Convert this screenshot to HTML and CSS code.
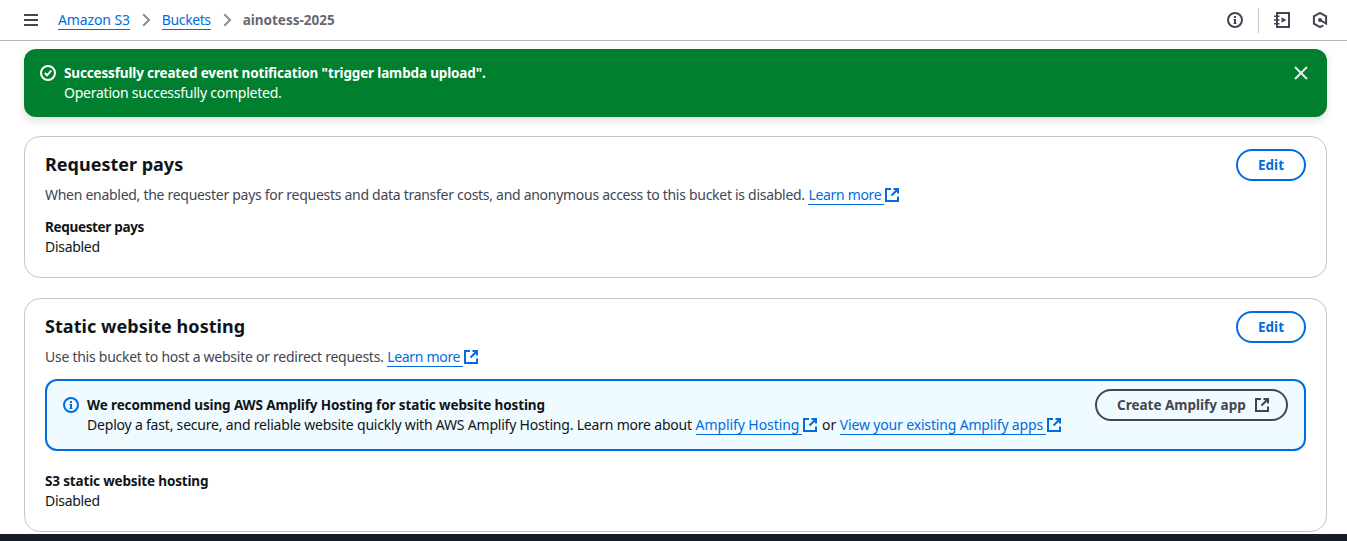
FILE: index.html
```html
<!DOCTYPE html>
<html lang="en">
<head>
<meta charset="utf-8">
<title>ainotess-2025 - S3 bucket</title>
<link rel="stylesheet" href="styles.css">
</head>
<body>
<svg class="sprite" aria-hidden="true">
  <symbol id="external" viewBox="0 0 16 16"><path d="M9.500 2H14v4.500M7.500 8.500 14 2M14 9.500V14H2V2h5"/></symbol>
  <symbol id="info" viewBox="0 0 16 16"><circle cx="8" cy="8" r="7"/><path d="M8 12V7M8 4v2"/><path class="serif" d="M6.500 7.500H8M6.500 11.500h3"/></symbol>
  <symbol id="chevron" viewBox="0 0 16 16"><path d="M5.200 2.200 11 8l-5.800 5.800"/></symbol>
</svg>
<header class="topbar">
  <nav class="crumbs">
    <svg class="icon menu" viewBox="0 0 16 16"><path d="M1 3h14M1 8h14M1 13h14"/></svg>
    <a class="link crumb-root" href="#">Amazon S3</a>
    <svg class="icon chevron"><use href="#chevron"/></svg>
    <a class="link crumb-buckets" href="#">Buckets</a>
    <svg class="icon chevron"><use href="#chevron"/></svg>
    <span class="current">ainotess-2025</span>
  </nav>
  <div class="tools">
    <svg class="icon"><use href="#info"/></svg>
    <span class="divider"></span>
    <svg class="icon" viewBox="0 0 16 16"><path d="M3 1h12v14H3z"/><path class="rings" d="M0 4.200h5.500M0 8h5.500M0 11.800h5.500"/><path class="solid" d="M7.500 5.200v5.600l5-2.800z"/></svg>
    <svg class="icon" viewBox="0 0 16 16"><path d="M11.300 13.300 8 15.100 1.900 11.600V4.400L8 .9l6.100 3.500v7.200L8 8"/><circle class="solid" cx="8" cy="8" r="2"/></svg>
  </div>
</header>
<main class="content">
  <section class="flash">
    <svg class="icon" viewBox="0 0 16 16"><circle cx="8" cy="8" r="7"/><path d="m4.800 8 2.200 2.300 4.200-4.600"/></svg>
    <div class="message">
      <div class="strong flash-title">Successfully created event notification "trigger lambda upload".</div>
      <div class="flash-text">Operation successfully completed.</div>
    </div>
    <svg class="icon close" viewBox="0 0 16 16"><path d="m2 2 12 12M14 2 2 14"/></svg>
  </section>
  <section class="card card-pays">
    <div class="card-head"><h2 class="title-pays">Requester pays</h2><button class="button">Edit</button></div>
    <p class="description"><span class="desc-pays">When enabled, the requester pays for requests and data transfer costs, and anonymous access to this bucket is disabled.</span> <a class="link external" href="#"><span class="label learn">Learn more</span><svg class="icon"><use href="#external"/></svg></a></p>
    <div class="strong key-pays">Requester pays</div>
    <div class="value">Disabled</div>
  </section>
  <section class="card card-hosting">
    <div class="card-head"><h2 class="title-hosting">Static website hosting</h2><button class="button">Edit</button></div>
    <p class="description"><span class="desc-hosting">Use this bucket to host a website or redirect requests.</span> <a class="link external" href="#"><span class="label learn">Learn more</span><svg class="icon"><use href="#external"/></svg></a></p>
    <div class="alert">
      <svg class="icon"><use href="#info"/></svg>
      <div class="message">
        <div class="strong alert-title">We recommend using AWS Amplify Hosting for static website hosting</div>
        <div class="alert-text"><span class="deploy">Deploy a fast, secure, and reliable website quickly with AWS Amplify Hosting. Learn more about</span> <a class="link external" href="#"><span class="label amplify">Amplify Hosting</span><svg class="icon"><use href="#external"/></svg></a> or <a class="link external" href="#"><span class="label apps">View your existing Amplify apps</span><svg class="icon"><use href="#external"/></svg></a></div>
      </div>
      <button class="button neutral"><span class="create">Create Amplify app</span><svg class="icon"><use href="#external"/></svg></button>
    </div>
    <div class="strong key-hosting">S3 static website hosting</div>
    <div class="value">Disabled</div>
  </section>
</main>
<footer class="footer"></footer>
</body>
</html>
```
FILE: styles.css
```css
* { box-sizing: border-box; }
body {
  margin: 0;
  height: 541px;
  overflow: hidden;
  display: flex;
  flex-direction: column;
  background: #fff;
  color: #0f141a;
  font: 14px/20px "Noto Sans", sans-serif;
}
.sprite { display: none; }
.icon { width: 16px; height: 16px; flex: none; fill: none; stroke: currentColor; stroke-width: 2; }
.solid { fill: currentColor; stroke: none; }
.serif { stroke-width: 1; }
.rings { stroke-width: 1.6; }
.link { color: #006ce0; text-decoration: none; }
.strong { font-weight: 700; font-size: 13.5px; white-space: nowrap; }
.topbar {
  height: 41px;
  flex: none;
  display: flex;
  align-items: center;
  justify-content: space-between;
  padding: 0 19px 0 23px;
  border-bottom: 1px solid #b4b4bb;
  color: #424650;
}
.crumbs { display: flex; align-items: center; }
.crumbs .link { border-bottom: 1px solid; line-height: 18px; white-space: nowrap; }
.crumb-root { letter-spacing: -.12px; }
.crumb-buckets { letter-spacing: -.4px; }
.menu { margin-right: 19px; }
.chevron { color: #8c8c94; margin: 0 8px; }
.current { font-weight: 700; font-size: 13.5px; color: #656871; }
.tools { display: flex; align-items: center; }
.divider { width: 1px; height: 25px; background: #c6c6cd; margin: 0 15px; }
.tools .icon:last-child { margin-left: 22px; }
.content { padding: 8px 20px 2px 24px; height: 493px; flex: none; }
.flash {
  height: 68px;
  border-radius: 12px;
  background: #00802f;
  color: #fff;
  display: flex;
  padding: 14px 18px 14px 16px;
  box-shadow: 0 4px 8px rgba(0, 7, 22, .12);
}
.flash > .icon { margin-top: 2px; }
.flash-title { letter-spacing: -.15px; }
.flash-text { letter-spacing: -.24px; }
.message { flex: 1; margin-left: 8px; white-space: nowrap; }
.close { color: #ebebf0; }
.card { border: 1px solid #c6c6cd; border-radius: 16px; padding: 12px 20px; }
.card-pays { margin-top: 19px; height: 142px; }
.card-hosting { margin-top: 20px; height: 234px; }
.card-head { display: flex; justify-content: space-between; height: 32px; }
h2 { margin: 3px 0 0; font-size: 18px; line-height: 24px; font-weight: 700; white-space: nowrap; }
.title-hosting { letter-spacing: .05px; }
.button {
  height: 32px;
  width: 70px;
  border: 2px solid #006ce0;
  border-radius: 16px;
  background: #fff;
  color: #006ce0;
  padding: 0;
  font: 700 13.5px/20px "Noto Sans", sans-serif;
  display: flex;
  align-items: center;
  justify-content: center;
}
.description { margin: 4px 0 12px; color: #424650; white-space: nowrap; }
.desc-pays { letter-spacing: -.285px; }
.desc-hosting { letter-spacing: -.26px; }
.external .label { display: inline-block; line-height: 18px; border-bottom: 1px solid; padding-right: 3px; }
.external .icon { vertical-align: -3px; }
.external .learn { letter-spacing: -.32px; }
.external .amplify { letter-spacing: -.08px; }
.external .apps { letter-spacing: -.16px; }
.key-pays { letter-spacing: -.33px; }
.key-hosting { letter-spacing: -.16px; }
.value { letter-spacing: -.3px; }
.alert {
  height: 72px;
  margin-bottom: 20px;
  border: 2px solid #006ce0;
  border-radius: 12px;
  background: #f0fbff;
  display: flex;
  padding: 8px 16px;
}
.alert > .icon { margin-top: 8px; color: #006ce0; }
.alert .message { margin-top: 6px; }
.alert-title { letter-spacing: -.12px; }
.deploy { letter-spacing: -.2px; }
.neutral {
  width: 193px;
  padding: 0 16px 0 20px;
  justify-content: space-between;
  border-color: #424650;
  color: #424650;
  background: transparent;
  white-space: nowrap;
}
.footer { height: 7px; flex: none; background: #161d26; }
```
